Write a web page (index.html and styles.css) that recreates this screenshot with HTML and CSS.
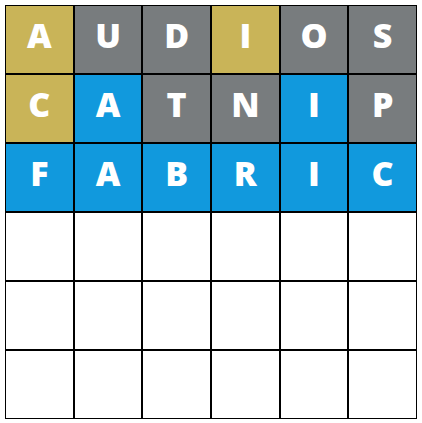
FILE: index.html
```html
<!DOCTYPE html>
<html lang="en">
<head>
    <meta charset="UTF-8">
    <meta name="viewport" content="width=device-width, initial-scale=1.0">
    <title>Word Grid</title>
    <link rel="stylesheet" href="styles.css">
</head>
<body>
    <!-- Guess board: 6 rows of 6 letters -->
    <div class="board">
        <div class="tile present">A</div>
        <div class="tile absent">U</div>
        <div class="tile absent">D</div>
        <div class="tile present">I</div>
        <div class="tile absent">O</div>
        <div class="tile absent">S</div>

        <div class="tile present">C</div>
        <div class="tile correct">A</div>
        <div class="tile absent">T</div>
        <div class="tile absent">N</div>
        <div class="tile correct">I</div>
        <div class="tile absent">P</div>

        <div class="tile correct">F</div>
        <div class="tile correct">A</div>
        <div class="tile correct">B</div>
        <div class="tile correct">R</div>
        <div class="tile correct">I</div>
        <div class="tile correct">C</div>

        <div class="tile"></div><div class="tile"></div><div class="tile"></div>
        <div class="tile"></div><div class="tile"></div><div class="tile"></div>
        <div class="tile"></div><div class="tile"></div><div class="tile"></div>
        <div class="tile"></div><div class="tile"></div><div class="tile"></div>
        <div class="tile"></div><div class="tile"></div><div class="tile"></div>
        <div class="tile"></div><div class="tile"></div><div class="tile"></div>
    </div>
</body>
</html>
```

FILE: styles.css
```css
body { margin: 5px; background: #fff; font-family: "Open Sans", Arial, sans-serif; }
.board { display: grid; grid-template-columns: repeat(6, 1fr); grid-auto-rows: 67px; gap: 2px; padding: 1px; width: 410px; background: #000; }
.tile { display: flex; align-items: center; justify-content: center; padding-bottom: 9px; background: #fff; color: #fff; font-size: 34px; font-weight: 800; }
.tile.present { background-color: #c9b458; }
.tile.absent { background-color: #787c7e; }
.tile.correct { background-color: #1199dd; }
```
